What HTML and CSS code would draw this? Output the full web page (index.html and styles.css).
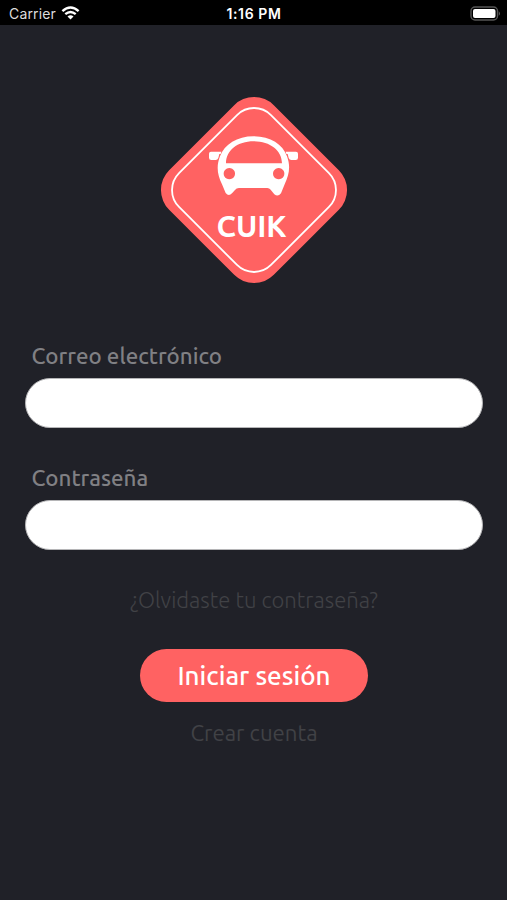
FILE: index.html
```html
<!DOCTYPE html>
<html lang="es">
<head>
<meta charset="utf-8">
<title>CUIK</title>
<link rel="stylesheet" href="styles.css">
</head>
<body>
<header class="status">
  <div class="carrier"><span>Carrier</span>
    <svg class="wifi" viewBox="0 0 18 14" width="19" height="14">
      <g fill="none" stroke="#fff" stroke-width="2.4"><path d="M.9 5.1Q9-2.1 17.1 5.1"/><path d="M3.8 8.2Q9 3.8 14.2 8.2"/></g>
      <path d="M6 10.4Q9 8 12 10.4L9 13.6Z" fill="#fff"/>
    </svg>
  </div>
  <div class="time">1:16 PM</div>
  <svg class="battery" viewBox="0 0 31 15" width="31" height="15">
    <rect x="1" y="1" width="26.5" height="13" rx="4" fill="#000" stroke="#555" stroke-width="1.4"/>
    <rect x="3" y="3" width="22.5" height="9" rx="2" fill="#fff"/>
    <path d="M28.8 5.2Q31 7.5 28.8 9.8Z" fill="#666"/>
  </svg>
</header>
<main class="login">
  <svg class="logo" viewBox="160 96 188 188" width="188" height="188" role="img" aria-label="CUIK">
    <rect x="180" y="116" width="148" height="148" rx="28" transform="rotate(45 254 190)" fill="#ff6262"/>
    <rect x="189" y="125" width="130" height="130" rx="24" transform="rotate(45 254 190)" fill="none" stroke="#fff" stroke-width="1.8"/>
    <g transform="translate(200 130) scale(.33333)" fill="#fff">
      <path fill-rule="evenodd" d="M161 19C211 19 248 43 261 79C272 110 268 132 254 163L243 190Q234 202 223 193L212 179Q208 174 202 174H117Q109 174 105 180L96 190Q86 201 77 189L66 163C51 132 49 108 60 79C74 43 111 19 161 19ZM78 100H246C246 62 210 34 161 34C112 34 78 62 78 100ZM88 114a17 17 0 1 0 .1 0ZM236 114a17 17 0 1 0 .1 0Z"/>
      <path d="M33 65H64L62 72H58L55 84Q53 90 47 90H34Q27 90 27 83V71Q27 65 33 65ZM257 65H288Q294 65 294 71V83Q294 90 287 90H274Q268 90 266 84L263 72H259Z"/>
    </g>
    <text class="brand" x="251.5" y="236.5" text-anchor="middle" textLength="70" lengthAdjust="spacingAndGlyphs">CUIK</text>
  </svg>
  <form class="form">
    <label class="label label-email" for="email">Correo electrónico</label>
    <input class="field" id="email" type="email">
    <label class="label label-password" for="password">Contraseña</label>
    <input class="field" id="password" type="password">
    <a class="link forgot">¿Olvidaste tu contraseña?</a>
    <button class="submit" type="button">Iniciar sesión</button>
    <a class="link create">Crear cuenta</a>
  </form>
</main>
</body>
</html>
```
FILE: styles.css
```css
* { box-sizing: border-box; }
body {
  margin: 0;
  height: 900px;
  overflow: hidden;
  background: #202128;
  font-family: Ubuntu, "Noto Sans", sans-serif;
}
.status {
  height: 25px;
  padding: 0 6px 0 9px;
  display: grid;
  grid-template-columns: 1fr auto 1fr;
  align-items: center;
  background: #000;
  color: #fff;
  font: 14px/25px Inter, sans-serif;
}
.carrier { display: flex; align-items: center; gap: 5px; color: #ddd; padding-top: 1px; letter-spacing: .15px; }
.carrier svg { margin-top: -2px; }
.time { font-weight: 600; padding-top: 1px; font-size: 14px; letter-spacing: .6px; margin-left: -2px; }
.battery { justify-self: end; margin-top: 1px; }
.login { display: flex; flex-direction: column; align-items: center; padding: 71px 24px 0 25px; }
.logo { display: block; }
.brand { font: 700 29.5px Ubuntu, "Noto Sans", sans-serif; fill: #fff; }
.form { width: 458px; display: flex; flex-direction: column; align-items: center; margin-top: 57px; }
.label {
  align-self: flex-start;
  margin-left: 6.5px;
  height: 36.5px;
  line-height: 30px;
  font-size: 22.3px;
  font-weight: 500;
  color: #808084;
}
.label-password { margin-top: 35.5px; height: 37px; }
.field {
  width: 458px;
  height: 50px;
  padding: 0 24px;
  border: 1px solid #b5b5b7;
  border-radius: 25px;
  background: #fff;
  outline: none;
}
.link { font-size: 22.2px; line-height: 30px; color: #414246; white-space: nowrap; }
.forgot { margin-top: 35px; font-size: 22.1px; font-weight: 300; }
.submit {
  width: 228px;
  height: 53px;
  margin: 34px 0 16px;
  padding: 0;
  border: 0;
  border-radius: 27px;
  background: #ff6262;
  color: #fff;
  font: 500 26px/54px Ubuntu, "Noto Sans", sans-serif;
}
```
